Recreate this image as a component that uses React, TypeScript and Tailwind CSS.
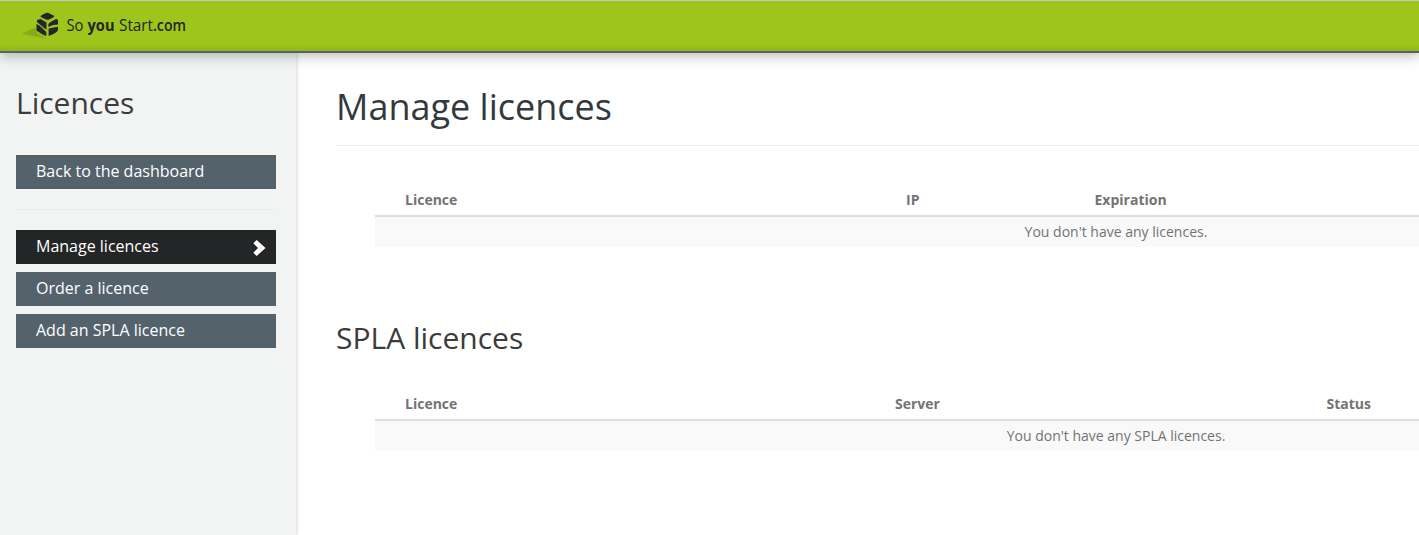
import type { ReactNode } from "react";

function Logo() {
  return (
    <svg width="170" height="34" viewBox="0 0 170 34" role="img" aria-label="So you Start.com">
      <path d="M-0.500 26 L13.500 19.500 L15 25 L25 30.500 Z" fill="#86aa1c" />
      <g fill="#242628">
        <path d="M18.700 8 Q19 7.300 24 5 Q25.200 4.500 26.500 5 L32 7.800 V9 L26.500 11.700 H24.500 L18.700 9 Z" />
        <path d="M15 12 L18.500 11 L24.500 14.500 V21.500 L22 20 L15 14 Z" />
        <path d="M14.500 16 L17.500 17.500 L24.300 24 V28 L20.500 26.500 L14.500 22.500 Z" />
        <path d="M26.300 16 Q28 14 34 11 Q36 10.800 36 12.500 V16.500 L31 17 L26.500 19 Z" />
        <path d="M26.600 20.500 L36 18.800 V22 Q35 25 26.600 28 Z" />
      </g>
      <g fill="#242628" fontFamily="'Open Sans', sans-serif" fontSize="16">
        <text x="44.500" y="23" textLength="17" lengthAdjust="spacingAndGlyphs">So</text>
        <text x="65.500" y="23" textLength="27" lengthAdjust="spacingAndGlyphs" fontWeight="700">you</text>
        <text x="97" y="23" textLength="34" lengthAdjust="spacingAndGlyphs">Start</text>
        <text x="131" y="23" textLength="33" lengthAdjust="spacingAndGlyphs" fontWeight="600">.com</text>
      </g>
    </svg>
  );
}

function MenuItem({ children, active = false }: { children: ReactNode; active?: boolean }) {
  return (
    <a
      className={
        "flex h-[34px] items-center justify-between pb-0.5 pl-5 pr-2.5 text-base text-white " +
        (active ? "bg-[#232527]" : "bg-[#54626c]")
      }
    >
      {children}
      {active && (
        <svg className="mt-1" width="14" height="16" viewBox="0 0 14 16">
          <path d="M1.300 3.300 L4.700 0 L13.500 8 L4.700 16 L1.300 12.700 L6 8 Z" fill="#fff" />
        </svg>
      )}
    </a>
  );
}

function LicenceTable({ head, empty }: { head: ReactNode; empty: string }) {
  return (
    <div className="ml-[39px] w-[1482px] text-sm text-[#737373]">
      <div className="flex h-[34px] border-b-2 border-[#dddddd] pl-[30px] pt-[7px] font-bold">{head}</div>
      <div className="h-[30px] bg-[#f9f9f9] pt-[5px] text-center">{empty}</div>
    </div>
  );
}

export default function App() {
  return (
    <div className="flex h-[535px] flex-col overflow-hidden bg-white font-['Open_Sans',sans-serif]">
      <header className="z-10 h-[53px] shrink-0 border-b-2 border-t border-b-[#54626c] border-t-[#c8c8c8] bg-linear-to-b from-[#9dc51c] from-85% to-[#91b61b] pl-[22px] pt-[7px] shadow-[0_3px_12px_rgba(0,0,0,0.28)]">
        <Logo />
      </header>
      <div className="flex min-h-0 flex-1">
        <aside className="w-[297px] shrink-0 border-r border-[#e6e7e7] bg-[#f2f4f3] pl-4 pr-5 shadow-[0_0_4px_rgba(0,0,0,0.15)]">
          <h2 className="mt-[30px] h-[72px] text-[30px] leading-10 text-[#3b3b3b]">Licences</h2>
          <MenuItem>Back to the dashboard</MenuItem>
          <hr className="my-5 border-[#ebedec]" />
          <nav className="flex flex-col gap-2">
            <MenuItem active>Manage licences</MenuItem>
            <MenuItem>Order a licence</MenuItem>
            <MenuItem>Add an SPLA licence</MenuItem>
          </nav>
        </aside>
        <main className="min-w-0 flex-1 overflow-hidden pl-[39px]">
          <h1 className="h-[93px] border-b border-[#eeeeee] pt-[29px] text-[36px] leading-[50px] text-[#33393c]">
            Manage licences
          </h1>
          <div className="mt-[37px]">
            <LicenceTable
              head={
                <>
                  <span className="w-[501px]">Licence</span>
                  <span className="w-[188.500px]">IP</span>
                  <span>Expiration</span>
                </>
              }
              empty="You don't have any licences."
            />
          </div>
          <h2 className="mt-[71px] h-[69px] text-[30px] leading-10 text-[#3b3b3b]">SPLA licences</h2>
          <LicenceTable
            head={
              <>
                <span className="w-[490px]">Licence</span>
                <span className="w-[431.500px]">Server</span>
                <span>Status</span>
              </>
            }
            empty="You don't have any SPLA licences."
          />
        </main>
      </div>
    </div>
  );
}
